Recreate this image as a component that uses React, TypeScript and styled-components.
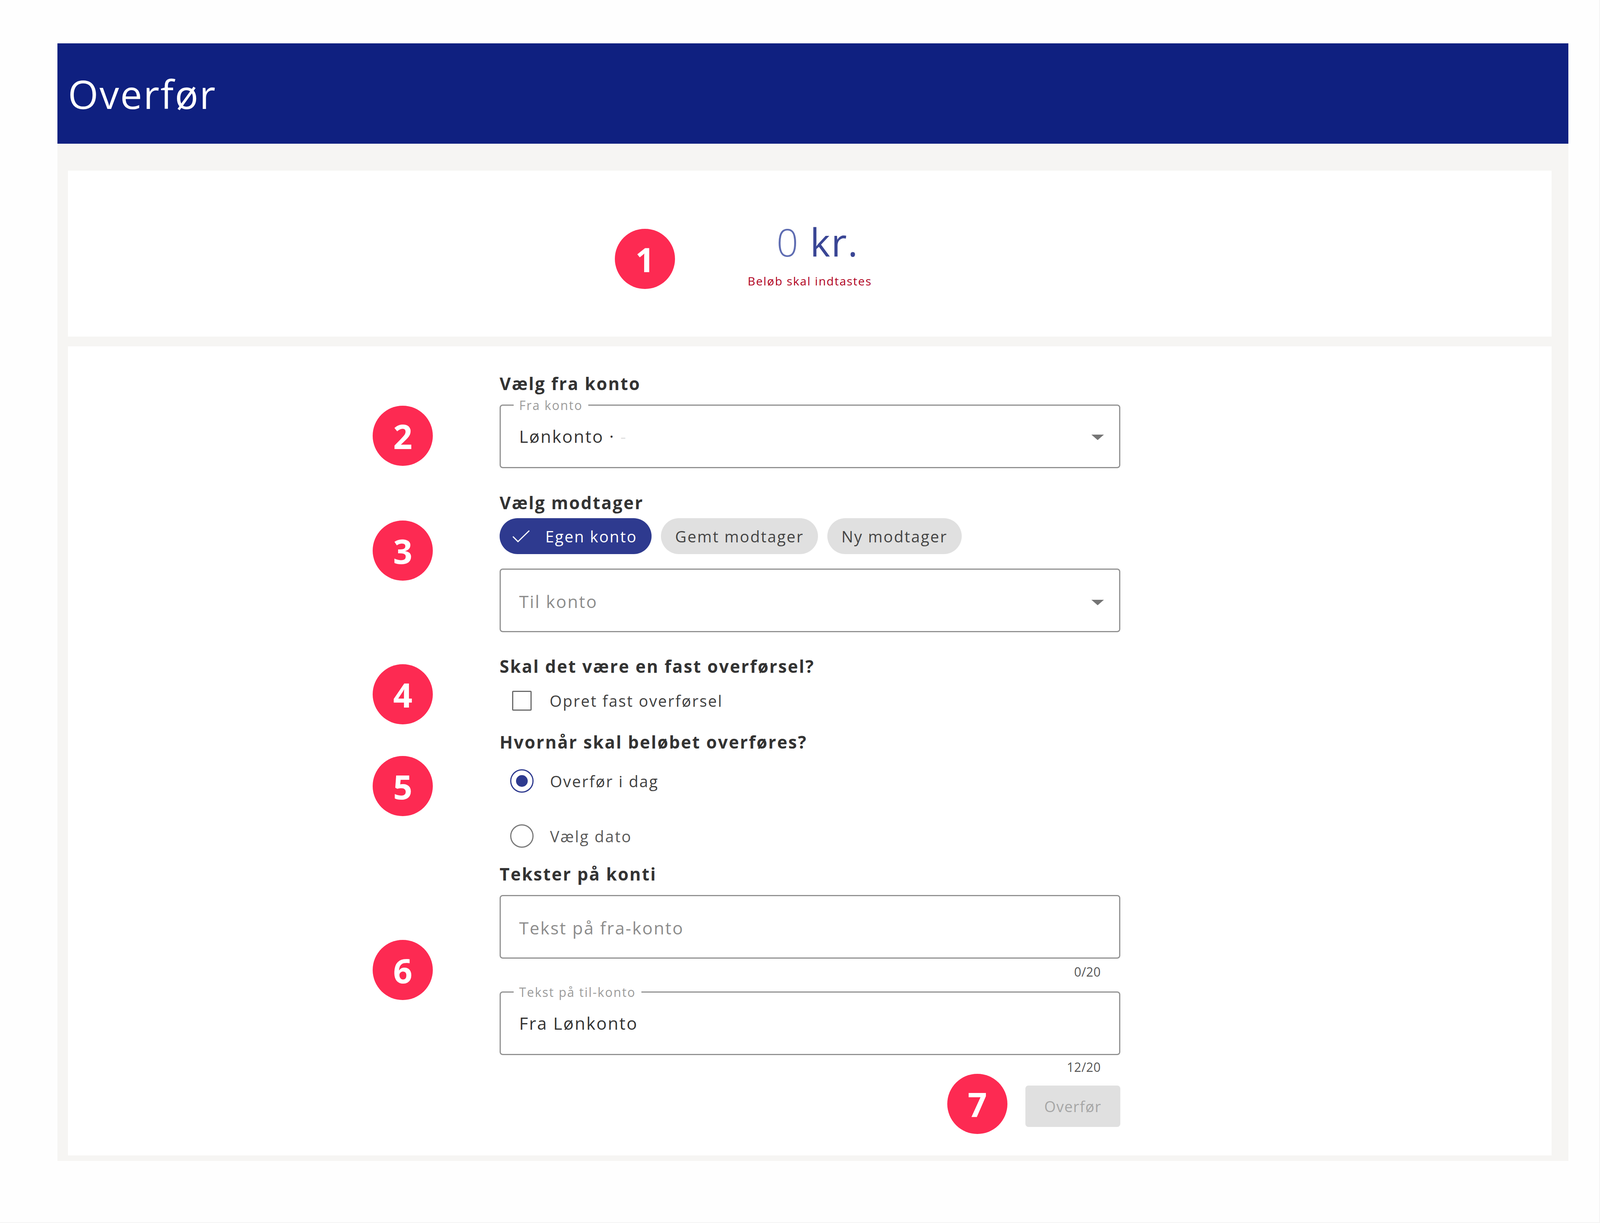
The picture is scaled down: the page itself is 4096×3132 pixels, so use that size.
import styled, { createGlobalStyle } from 'styled-components';

const GlobalStyle = createGlobalStyle`
  html,
  body {
    margin: 0;
    padding: 0;
    background: #fefefe;
  }

  * {
    box-sizing: border-box;
  }
`;

const Page = styled.div`
  position: relative;
  width: 4096px;
  height: 3132px;
  padding: 111px 79px 0 147px;
  border-right: 2px solid #f3f3f3;
  border-bottom: 2px solid #f3f3f3;
  font-family: 'Open Sans', 'Liberation Sans', sans-serif;
  color: #333333;
  background: #fefefe;
  overflow: hidden;
`;

const Panel = styled.main`
  height: 2862px;
  background: #f6f5f3;
`;

const Header = styled.header`
  display: flex;
  align-items: center;
  height: 257px;
  padding-left: 27px;
  background: #0f2080;
`;

const Title = styled.h1`
  margin: 0;
  font-weight: 400;
  font-size: 100px;
  letter-spacing: 3px;
  color: #ffffff;
`;

const Cards = styled.div`
  display: flex;
  flex-direction: column;
  gap: 25px;
  padding: 69px 43px 0 27px;
`;

const AmountCard = styled.section`
  display: flex;
  flex-direction: column;
  align-items: center;
  height: 425px;
  padding-top: 115px;
  background: #ffffff;
`;

const Amount = styled.div`
  padding-left: 40px;
  font-weight: 400;
  font-size: 98px;
  line-height: 134px;
  letter-spacing: 2.4px;
  color: #3a4695;
`;

const AmountZero = styled.span`
  font-weight: 300;
  color: #5f6db2;
`;

const AmountError = styled.div`
  margin-top: 14px;
  font-size: 30px;
  line-height: 40px;
  letter-spacing: 2px;
  color: #b00020;
`;

const FormCard = styled.section`
  height: 2072px;
  padding: 70px 0;
  background: #ffffff;
`;

const Form = styled.form`
  display: flex;
  flex-direction: column;
  width: 1589px;
  margin-left: 1105px;
`;

const Heading = styled.h2<{ $mt?: number }>`
  margin: ${(p) => p.$mt ?? 0}px 0 0;
  font-weight: 700;
  font-size: 44px;
  line-height: 50px;
  letter-spacing: 2.7px;
  color: #333333;
`;

const Field = styled.div<{ $mt: number; $filled?: boolean }>`
  position: relative;
  display: flex;
  align-items: center;
  justify-content: space-between;
  flex: none;
  height: 163px;
  margin-top: ${(p) => p.$mt}px;
  padding: ${(p) => (p.$filled ? '0 39px 2px 47px' : '4px 39px 0 47px')};
  border: 3px solid #919191;
  border-radius: 8px;
  background: #ffffff;
`;

const FieldLabel = styled.span`
  position: absolute;
  top: -18px;
  left: 33px;
  padding: 0 14px;
  font-size: 32px;
  line-height: 34px;
  letter-spacing: 2.3px;
  color: #9b9b9b;
  background: #ffffff;
`;

const FieldValue = styled.span`
  font-size: 44px;
  letter-spacing: 2.7px;
  color: #333333;
`;

const Placeholder = styled(FieldValue)`
  color: #8c8c8c;
`;

const Masked = styled.span`
  color: #e2e2e2;
`;

const Arrow = styled.svg`
  margin-top: 6px;
`;

const Chips = styled.div`
  display: flex;
  gap: 24px;
  margin-top: 15px;
`;

const Chip = styled.span<{ $selected?: boolean }>`
  display: flex;
  align-items: center;
  gap: 40px;
  height: 92px;
  padding: ${(p) => (p.$selected ? '0 37px 0 33px' : '0 36px')};
  border-radius: 46px;
  font-size: 40px;
  letter-spacing: 2.6px;
  color: ${(p) => (p.$selected ? '#ffffff' : '#444444')};
  background: ${(p) => (p.$selected ? '#2e3a8f' : '#e0e0e0')};
`;

const OptionRow = styled.label<{
  $mt: number;
  $ml: number;
  $gap: number;
  $height: number;
  $muted?: boolean;
}>`
  display: flex;
  align-items: center;
  gap: ${(p) => p.$gap}px;
  height: ${(p) => p.$height}px;
  margin: ${(p) => p.$mt}px 0 0 ${(p) => p.$ml}px;
  font-size: 40px;
  letter-spacing: 2.7px;
  color: ${(p) => (p.$muted ? '#5a5a5a' : '#404040')};
`;

const CheckBox = styled.span`
  flex: none;
  width: 50px;
  height: 51px;
  border: 3px solid #6b6b6b;
  border-radius: 3px;
`;

const Radio = styled.span<{ $checked?: boolean }>`
  position: relative;
  flex: none;
  width: 60px;
  height: 60px;
  border: 3px solid ${(p) => (p.$checked ? '#2e3a8f' : '#7a7a7a')};
  border-radius: 50%;

  &::after {
    content: '';
    display: ${(p) => (p.$checked ? 'block' : 'none')};
    position: absolute;
    top: 12px;
    left: 12px;
    width: 30px;
    height: 30px;
    border-radius: 50%;
    background: #2e3a8f;
  }
`;

const Counter = styled.div<{ $mt: number }>`
  margin-top: ${(p) => p.$mt}px;
  padding-right: 50px;
  font-size: 32px;
  line-height: 34px;
  text-align: right;
  letter-spacing: 0.4px;
  color: #555555;
`;

const SubmitButton = styled.button`
  align-self: flex-end;
  width: 243px;
  height: 106px;
  margin-top: 30px;
  border: 0;
  border-radius: 8px;
  font-family: inherit;
  font-size: 38px;
  letter-spacing: 1.4px;
  color: #a6a6a6;
  background: #e0e0e0;
`;

const StepBadge = styled.span<{ $x: number; $y: number }>`
  position: absolute;
  top: ${(p) => p.$y - 77}px;
  left: ${(p) => p.$x - 77}px;
  display: flex;
  align-items: center;
  justify-content: center;
  width: 154px;
  height: 154px;
  border-radius: 50%;
  font-weight: 700;
  font-size: 86px;
  color: #ffffff;
  background: #fd2a52;
`;

function DropdownArrow() {
  return (
    <Arrow width="32" height="14" viewBox="0 0 32 14">
      <path d="M0 0h32L16 14z" fill="#757575" />
    </Arrow>
  );
}

function CheckMark() {
  return (
    <svg width="44" height="31" viewBox="0 0 44 31" fill="none">
      <path d="M1 16l13 13L43 1" stroke="#ffffff" strokeWidth="3" />
    </svg>
  );
}

const badges = [
  { step: 1, x: 1651, y: 663 },
  { step: 2, x: 1031, y: 1116 },
  { step: 3, x: 1031, y: 1410 },
  { step: 4, x: 1031, y: 1778 },
  { step: 5, x: 1031, y: 2013 },
  { step: 6, x: 1031, y: 2484 },
  { step: 7, x: 2502, y: 2827 },
];

export default function App() {
  return (
    <Page>
      <GlobalStyle />

      <Panel>
        <Header>
          <Title>Overfør</Title>
        </Header>

        <Cards>
          <AmountCard>
            <Amount>
              <AmountZero>0</AmountZero> kr.
            </Amount>
            <AmountError>Beløb skal indtastes</AmountError>
          </AmountCard>

          <FormCard>
            <Form>
              <Heading>Vælg fra konto</Heading>
              <Field $mt={29} $filled>
                <FieldLabel>Fra konto</FieldLabel>
                <FieldValue>
                  Lønkonto · <Masked>-</Masked>
                </FieldValue>
                <DropdownArrow />
              </Field>

              <Heading $mt={63}>Vælg modtager</Heading>
              <Chips>
                <Chip $selected>
                  <CheckMark />
                  Egen konto
                </Chip>
                <Chip>Gemt modtager</Chip>
                <Chip>Ny modtager</Chip>
              </Chips>
              <Field $mt={37}>
                <Placeholder>Til konto</Placeholder>
                <DropdownArrow />
              </Field>

              <Heading $mt={62}>Skal det være en fast overførsel?</Heading>
              <OptionRow $mt={38} $ml={32} $gap={46} $height={51}>
                <CheckBox />
                Opret fast overførsel
              </OptionRow>

              <Heading $mt={55}>Hvornår skal beløbet overføres?</Heading>
              <OptionRow $mt={45} $ml={27} $gap={42} $height={60}>
                <Radio $checked />
                Overfør i dag
              </OptionRow>
              <OptionRow $mt={81} $ml={27} $gap={42} $height={60} $muted>
                <Radio />
                Vælg dato
              </OptionRow>

              <Heading $mt={42}>Tekster på konti</Heading>
              <Field $mt={29}>
                <Placeholder>Tekst på fra-konto</Placeholder>
              </Field>
              <Counter $mt={17}>0/20</Counter>
              <Field $mt={33} $filled>
                <FieldLabel>Tekst på til-konto</FieldLabel>
                <FieldValue>Fra Lønkonto</FieldValue>
              </Field>
              <Counter $mt={14}>12/20</Counter>
              <SubmitButton type="button">Overfør</SubmitButton>
            </Form>
          </FormCard>
        </Cards>
      </Panel>

      {badges.map((badge) => (
        <StepBadge key={badge.step} $x={badge.x} $y={badge.y}>
          {badge.step}
        </StepBadge>
      ))}
    </Page>
  );
}
